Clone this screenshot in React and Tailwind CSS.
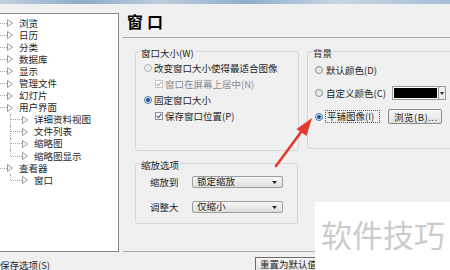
import React from "react";

const tree = [
  { label: "浏览", level: 0 },
  { label: "日历", level: 0 },
  { label: "分类", level: 0 },
  { label: "数据库", level: 0 },
  { label: "显示", level: 0 },
  { label: "管理文件", level: 0 },
  { label: "幻灯片", level: 0 },
  { label: "用户界面", level: 0 },
  { label: "详细资料视图", level: 1 },
  { label: "文件列表", level: 1 },
  { label: "缩略图", level: 1 },
  { label: "缩略图显示", level: 1, last: true },
  { label: "查看器", level: 0 },
  { label: "窗口", level: 1, last: true },
];

function Tri() {
  return (
    <svg width="6" height="8" viewBox="0 0 6 8" className="shrink-0">
      <path d="M0.5 0.5 L5.5 4 L0.5 7.5 Z" fill="white" stroke="#9a9a9a" strokeWidth="1" />
    </svg>
  );
}

function TreeRow({ label, level, last }) {
  return (
    <div className="relative flex h-[12.1px] items-center">
      {level === 0 ? (
        <span className="w-[7px] border-t border-dotted border-[#a8a8a8]" />
      ) : (
        <>
          <span
            className={`absolute left-[10px] top-0 border-l border-dotted border-[#a8a8a8] ${last ? "h-[6px]" : "h-[12.1px]"}`}
          />
          <span className="ml-[11px] w-[11px] border-t border-dotted border-[#a8a8a8]" />
        </>
      )}
      <Tri />
      <span className="ml-[6px] whitespace-nowrap leading-[11px] text-[#1e1e1e]">{label}</span>
    </div>
  );
}

function Radio({ checked, dim }) {
  return (
    <span
      className={`flex h-[8px] w-[8px] shrink-0 items-center justify-center rounded-full border ${
        checked ? "border-[#4a7fb0] bg-[#dbe9f5]" : dim ? "border-[#b8b8b8] bg-[#ececec]" : "border-[#8e8f8f] bg-[#e8e8e8]"
      }`}
    >
      {checked && <span className="h-[4px] w-[4px] rounded-full bg-[#1d4f86]" />}
    </span>
  );
}

function Check({ dim }) {
  return (
    <span
      className={`flex h-[8px] w-[8px] shrink-0 items-center justify-center border bg-white ${
        dim ? "border-[#c4c4c4]" : "border-[#8e8f8f]"
      }`}
    >
      <svg width="6" height="6" viewBox="0 0 6 6">
        <path d="M0.8 3 L2.4 4.6 L5.3 1" fill="none" stroke={dim ? "#b0b0b0" : "#3f5c9c"} strokeWidth="1.2" />
      </svg>
    </span>
  );
}

function Select({ text }) {
  return (
    <div className="flex h-[12px] w-[91px] items-center justify-between rounded-[2px] border border-[#9d9d9d] bg-[linear-gradient(#f6f6f6,#dedede)] pl-[4px] pr-[5px]">
      <span className="leading-none">{text}</span>
      <svg width="5" height="3" viewBox="0 0 5 3">
        <path d="M0 0 L5 0 L2.5 3 Z" fill="#222" />
      </svg>
    </div>
  );
}

function Group({ label, className, children }) {
  return (
    <div className={`relative rounded-[3px] border border-[#d6d6d6] ${className}`}>
      <span className="absolute -top-[4px] left-[4px] bg-[#f0f0f0] px-[1px] leading-[11px]">{label}</span>
      {children}
    </div>
  );
}

export default function App() {
  return (
    <div
      className="relative h-[270px] w-[450px] overflow-hidden bg-[#f0f0f0] text-[9.5px] leading-[12px] text-[#1e1e1e]"
      style={{ fontFamily: '"Noto Sans CJK SC", "Noto Sans", sans-serif' }}
    >
      <div className="h-[4px] bg-[linear-gradient(90deg,#c3d1de,#8eabc8_18%,#bccddd_36%,#90aecd_55%,#c7d5e1_75%,#a6bfd7)]" />

      <div className="flex">
        {/* tree */}
        <div className="-ml-[1px] mt-[9px] h-[239px] w-[120px] shrink-0 overflow-hidden border border-[#828790] bg-white pt-[3px]">
          {tree.map((t) => (
            <TreeRow key={t.label + t.level} {...t} />
          ))}
        </div>

        {/* right page */}
        <div className="flex-1">
          <div className="mt-[5px] h-[24px] pl-[8px] text-[16px] font-bold leading-[24px] tracking-[4px] text-black">窗口</div>
          <div className="ml-[4px] mt-[4px] h-px bg-[#a9a9a9]" />

          <div className="mt-[13px] flex gap-[8px] pl-[16px]">
            <div className="w-[164px] shrink-0">
              <Group label="窗口大小(W)" className="h-[100px] pl-[8px] pt-[8px]">
                <div className="flex h-[16px] items-center">
                  <Radio dim />
                  <span className="ml-[2px] whitespace-nowrap">改变窗口大小使得最适合图像</span>
                </div>
                <div className="flex h-[16px] items-center pl-[11px]">
                  <Check dim />
                  <span className="ml-[2px] whitespace-nowrap text-[#8d8d8d]">窗口在屏幕上居中(N)</span>
                </div>
                <div className="flex h-[16px] items-center">
                  <Radio checked />
                  <span className="ml-[2px]">固定窗口大小</span>
                </div>
                <div className="flex h-[16px] items-center pl-[11px]">
                  <Check />
                  <span className="ml-[2px]">保存窗口位置(P)</span>
                </div>
              </Group>

              <Group label="缩放选项" className="mt-[12px] h-[61px] w-[163px] pl-[14px] pt-[12px]">
                <div className="flex h-[12px] items-center">
                  <span className="w-[42px]">缩放到</span>
                  <Select text="锁定缩放" />
                </div>
                <div className="mt-[13px] flex h-[12px] items-center">
                  <span className="w-[42px]">调整大</span>
                  <Select text="仅缩小" />
                </div>
              </Group>
            </div>

            <Group label="背景" className="h-[98px] w-[150px] shrink-0 pl-[7px] pt-[11px]">
              <div className="flex h-[14px] items-center">
                <Radio />
                <span className="ml-[3px]">默认颜色(D)</span>
              </div>
              <div className="mt-[9px] flex h-[14px] items-center">
                <Radio />
                <span className="ml-[3px] w-[63px] whitespace-nowrap">自定义颜色(C)</span>
                <div className="ml-[3px] flex h-[14px] w-[54px] border border-[#9a9a9a] bg-white">
                  <div className="m-[1px] flex-1 bg-black" />
                  <div className="flex w-[7px] items-center justify-center border-l border-[#9a9a9a] bg-[#ececec]">
                    <svg width="4" height="3" viewBox="0 0 4 3">
                      <path d="M0 0 L4 0 L2 3 Z" fill="#222" />
                    </svg>
                  </div>
                </div>
              </div>
              <div className="mt-[9px] flex h-[15px] items-center">
                <Radio checked />
                <span className="ml-[2px] w-[55px] whitespace-nowrap border border-dotted border-[#555] px-[1px] leading-[11px]">平铺图像(I)</span>
                <div className="ml-[8px] flex h-[15px] w-[54px] items-center rounded-[2px] border border-[#8a8a8a] bg-[linear-gradient(#f6f6f6,#e2e2e2)] pl-[5px] tracking-[0.5px]">
                  浏览(B)...
                </div>
              </div>
            </Group>
          </div>

          <div className="ml-[4px] mt-[27px] h-px bg-[#a9a9a9]" />
        </div>
      </div>

      <div className="flex w-[335px] items-start justify-between">
        <span className="mt-[8px] leading-[11px]">保存选项(S)</span>
        <div className="mt-[5px] h-[16px] w-[80px] border border-[#6d6d6d] bg-[linear-gradient(#f6f6f6,#e2e2e2)] pl-[4px] leading-[13px]">
          重置为默认值(R)
        </div>
      </div>

      {/* watermark overlay */}
      <div className="absolute left-[315px] top-[202px] h-[68px] w-[135px] bg-white pl-[6px] pt-[14px] text-[31px] leading-[36px] text-[#cbcbcb]">
        软件技巧
      </div>

      {/* red arrow overlay */}
      <svg className="absolute left-0 top-0" width="450" height="270" viewBox="0 0 450 270">
        <path d="M276 166 L304 128" stroke="#e23a2e" strokeWidth="2.6" strokeLinecap="round" />
        <path d="M312 118 L306.5 136 L296.5 129 Z" fill="#e23a2e" />
      </svg>
    </div>
  );
}
